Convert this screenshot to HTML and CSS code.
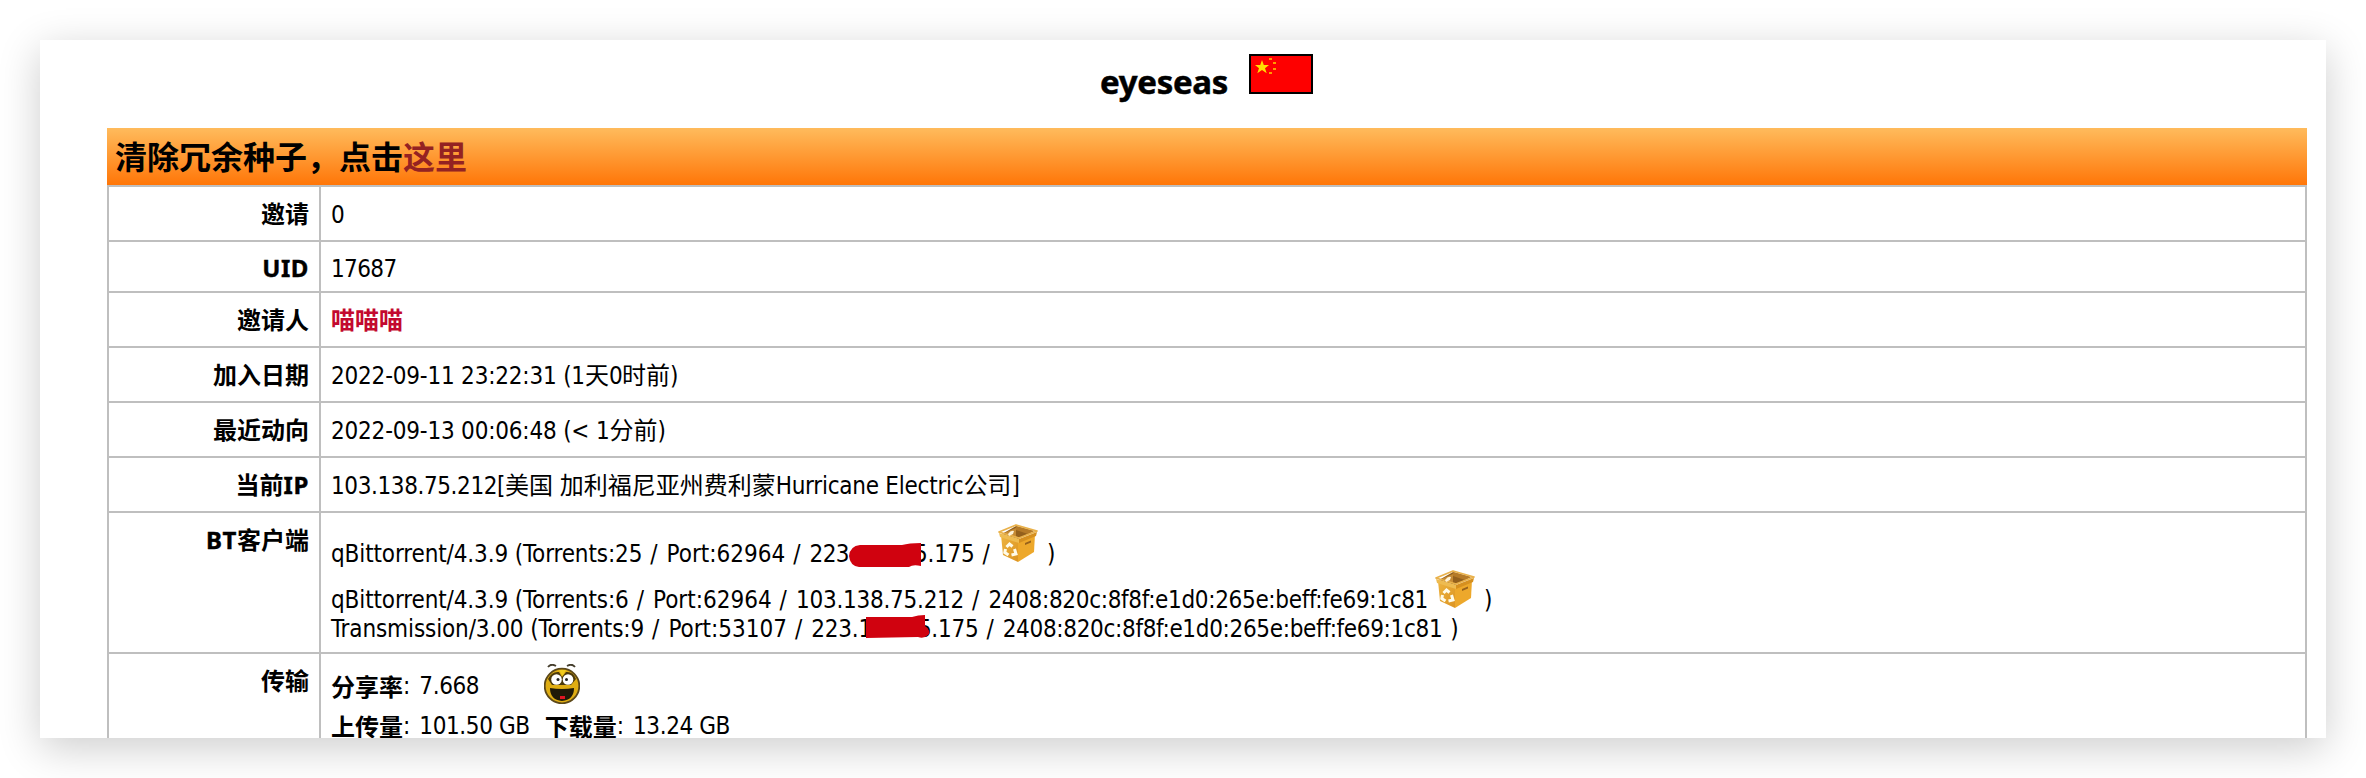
FILE: index.html
```
<!DOCTYPE html>
<html lang="zh-CN">
<head>
<meta charset="utf-8">
<title>eyeseas</title>
<link rel="stylesheet" href="styles.css">
</head>
<body>
<svg class="defs" width="0" height="0" aria-hidden="true">
  <defs>
    <linearGradient id="front" x1="0" y1="0" x2="1" y2="1"><stop offset="0" stop-color="#edb33f"/><stop offset="1" stop-color="#dc9422"/></linearGradient>
    <symbol id="box" viewBox="0 0 40 40">
      <path d="M3 12 20 17 20 39 5 32Z" fill="url(#front)"/>
      <path d="M20 17 37 11 36 29 20 39Z" fill="#eda82b"/>
      <path d="M4 11 18 3 36 8 20 16Z" fill="#94601c"/>
      <path d="M18 3 36 8 30 11 18 7Z" fill="#b57a28"/>
      <path d="M6 10 18 5 18 14Z" fill="#c58a34"/>
      <path d="M1 9 18 2 39 8 21 15Z" fill="none" stroke="#e9b14a" stroke-width="1.8" stroke-linejoin="round"/>
      <path d="M1 10 21 16 21 20 2 14Z" fill="#eebb50"/>
      <path d="M21 16 39 9 38 13 21 20Z" fill="#d6901f"/>
      <path d="M10 11q3-4 6-3l-1 3-4 2Z" fill="#fff3d8"/>
      <path d="M27 20 33 17.500 33 19.500 27 22Z" fill="#97621b"/>
      <g fill="none" stroke="#fffbe8" stroke-width="3"><path d="M8.500 24 11.500 21 14.500 23.500"/><path d="M16.500 26 18 31 13.500 32"/><path d="M10.500 32 6.800 29.500 7.500 26"/></g>
    </symbol>
  </defs>
</svg>
<main class="card">
  <h1 class="title"><span class="name">eyeseas</span>
    <svg class="flag" viewBox="0 0 64 40"><path fill="#000" d="M0 0h64v40H0z"/><path fill="#fe0000" d="M2 2h60v36H2z"/><path fill="#ffde00" d="m13 6 1.800 5H20l-4 3.200 1.700 5L13 16l-4.700 3.200 1.700-5L6 11h5.200z"/><path fill="#ff9c00" d="M20 4h3v2h-3zM24 8h3v2h-3zM24 14h3v2h-3zM20 18h3v2h-3z"/></svg>
  </h1>
  <section class="table">
    <div class="banner">清除冗余种子，点击<a class="here">这里</a></div>
    <div class="row"><div class="label">邀请</div><div class="value"><span class="lat num">0</span></div></div>
    <div class="row slim"><div class="label"><span class="latb">UID</span></div><div class="value"><span class="lat num">17687</span></div></div>
    <div class="row"><div class="label">邀请人</div><div class="value"><a class="inviter">喵喵喵</a></div></div>
    <div class="row"><div class="label">加入日期</div><div class="value"><span class="lat date">2022-09-11 23:22:31 (1</span>天<span class="lat num">0</span>时前<span class="lat">)</span></div></div>
    <div class="row"><div class="label">最近动向</div><div class="value"><span class="lat date">2022-09-13 00:06:48 (&lt; 1</span>分前<span class="lat">)</span></div></div>
    <div class="row"><div class="label">当前<span class="latb">IP</span></div><div class="value"><span class="lat addr">103.138.75.212[</span>美国<span class="lat"> </span>加利福尼亚州费利蒙<span class="lat">Hurricane Electric</span>公司<span class="lat">]</span></div></div>
    <div class="row clients"><div class="label"><span class="latb">BT</span>客户端</div>
      <div class="value">
        <div class="client first"><span class="lat app">qBittorrent/4.3.9 (Torrents:25</span><span class="lat sep"> / </span><span class="lat port">Port:62964</span><span class="lat sep"> / </span><span class="lat num">223.</span><span class="gap one"><svg class="redact" viewBox="0 0 73 24"><path fill="#d0020f" d="M11 2H53Q60 0 72 0V23Q64 21 60 24H10Q1 23 0 13 1 3 11 2Z"/></svg></span><span class="lat">5.175</span><span class="lat sep"> /</span><svg class="box"><use href="#box"/></svg><span class="lat">)</span></div>
        <div class="client second"><span class="lat app">qBittorrent/4.3.9 (Torrents:6</span><span class="lat sep"> / </span><span class="lat port">Port:62964</span><span class="lat sep"> / </span><span class="lat">103.138.75.212</span><span class="lat sep"> / </span><span class="lat v6">2408:820c:8f8f:e1d0:265e:beff:fe69:1c81</span><svg class="box"><use href="#box"/></svg><span class="lat">)</span></div>
        <div class="client"><span class="lat app">Transmission/3.00 (Torrents:9</span><span class="lat sep"> / </span><span class="lat port">Port:53107</span><span class="lat sep"> / </span><span class="lat">223.1</span><span class="gap two"><svg class="redact" viewBox="0 0 64 24"><path fill="#d0020f" d="M0 2H46Q52 0 59 0V11Q66 17 62 20 58 24 52 22L0 23Z"/></svg></span><span class="lat">5.175</span><span class="lat sep"> / </span><span class="lat v6">2408:820c:8f8f:e1d0:265e:beff:fe69:1c81</span><span class="lat sep"> )</span></div>
      </div>
    </div>
    <div class="row transfer"><div class="label">传输</div>
      <div class="value">
        <div class="stat"><b>分享率</b><span class="lat sep">: </span><span class="lat addr">7.668</span>
          <svg class="smiley" viewBox="0 0 36 40"><path d="M4 3Q7-1 12 2M23 2Q28-1 31 3" fill="none" stroke="#443d2c" stroke-width="1.800"/><circle cx="18" cy="22" r="17.300" fill="#dfad13" stroke="#5c4819" stroke-width="1.800"/><path d="M4 15Q8 7 15 8L18 13 22 8Q29 7 32 15L27 21H8Z" fill="#4c3a0b"/><path d="M15 6H22L18.500 12Z" fill="#f0cc20"/><circle cx="12.500" cy="15.500" r="5.300" fill="#fff"/><circle cx="24" cy="15.500" r="5.300" fill="#fff"/><circle cx="14" cy="15.500" r="1.500" fill="#222"/><circle cx="22.500" cy="15.500" r="1.500" fill="#222"/><path d="M6 24Q18 26 30 24 30 36 18 37 6 36 6 24Z" fill="#201a08"/><path d="M16 32h5v3h-5z" fill="#e01622"/></svg></div>
        <div class="stat"><b>上传量</b><span class="lat sep">: </span><span class="lat addr">101.50 GB</span><b class="down">下载量</b><span class="lat sep">: </span><span class="lat addr">13.24 GB</span></div>
      </div>
    </div>
  </section>
</main>
</body>
</html>
```
FILE: styles.css
```
* { box-sizing: border-box; }
html, body { margin: 0; height: 100%; overflow: hidden; background: #fff; }
body { padding: 40px; font: 24px/33px "DejaVu Sans Condensed", "Noto Sans CJK SC", sans-serif; color: #000; }
.defs { display: block; position: absolute; }
.card { height: 698px; padding: 0 19px 0 67px; overflow: hidden; background: #fff; box-shadow: 0 10px 40px rgba(0, 0, 0, .2); }
.title { display: flex; justify-content: flex-start; margin: 0; height: 88px; padding: 14px 0 0 993px; }
.name { width: 149px; font: bold 33px/56px "Noto Sans", sans-serif; letter-spacing: -.3px; -webkit-text-stroke: .5px #000; }
.flag { width: 64px; height: 40px; }
.banner { height: 57px; padding-left: 8px; font: bold 32px/55px "Noto Sans CJK SC", sans-serif; background: linear-gradient(#ffbb5c, #ff7608); }
.here { color: #942222; }
.row { display: grid; grid-template-columns: 212px 1fr; height: 55px; border: 2px solid #bfbfbf; border-bottom: 0; }
.slim { height: 51px; }
.label { padding: 9px 10px 0 0; border-right: 2px solid #bfbfbf; text-align: right; font: bold 24px/33px "Noto Sans CJK SC", sans-serif; }
.value { padding: 9px 0 0 10px; font: 24px/33px "Noto Sans CJK SC", sans-serif; }
.lat { font-family: "DejaVu Sans Condensed", sans-serif; letter-spacing: -.25px; white-space: pre; }
.num { letter-spacing: -.64px; }
.date { letter-spacing: -.2px; }
.addr { letter-spacing: -.4px; }
.app { letter-spacing: -.12px; }
.port { letter-spacing: 0; }
.v6 { letter-spacing: -.33px; }
.sep { letter-spacing: 1.1px; }
.latb { font-family: "Noto Sans", sans-serif; letter-spacing: .6px; -webkit-text-stroke: .4px #000; }
.slim .label, .slim .value { padding-top: 10px; line-height: 29px; }
.inviter { color: #c3092f; font-weight: bold; }
.clients { height: 141px; }
.clients .value { padding-top: 27px; }
.client { display: flex; height: 29px; line-height: 29px; }
.client.first { margin-bottom: 17px; }
.gap { position: relative; width: 59px; }
.redact { position: absolute; }
.one .redact { left: -6px; top: 3px; width: 73px; height: 24px; }
.two .redact { left: -6px; top: 0; width: 64px; height: 24px; }
.two { width: 46px; }
.box { flex: none; align-self: flex-end; width: 40px; height: 40px; margin: 0 9px 6px 7px; }
.transfer { height: 120px; }
.transfer .value { padding-top: 8px; }
.stat { display: flex; height: 40px; line-height: 48px; }
.smiley { width: 36px; height: 40px; margin: 2px 0 0 65px; }
.down { margin-left: 15px; }
```
